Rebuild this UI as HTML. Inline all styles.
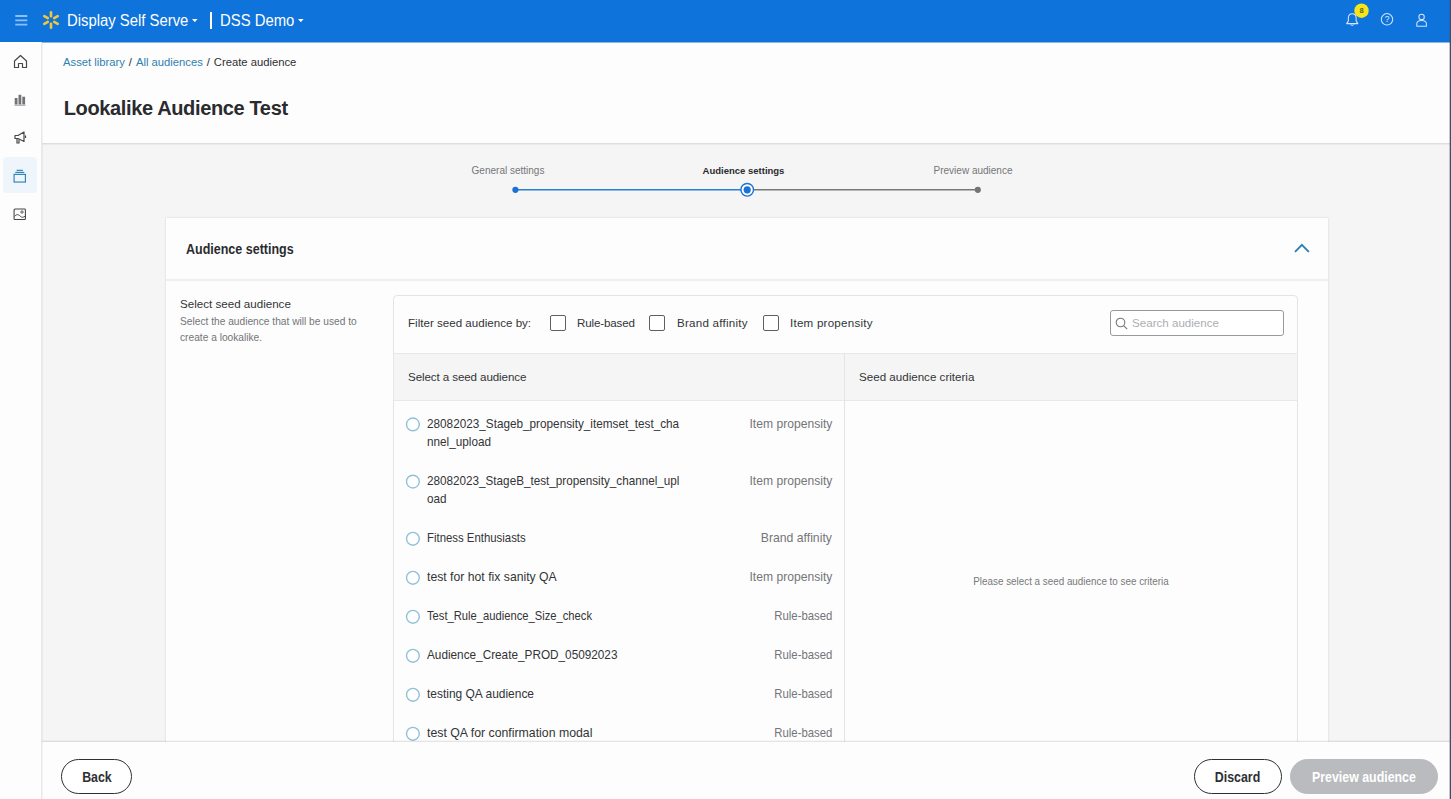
<!DOCTYPE html>
<html lang="en">
<head>
<meta charset="utf-8">
<title>Create audience</title>
<style>
*{box-sizing:border-box;margin:0;padding:0}
html,body{width:1451px;height:799px;overflow:hidden;background:#f5f5f5;font-family:"Liberation Sans",sans-serif;color:#2e2f32}
.abs{position:absolute}
#top{position:absolute;left:0;top:0;width:1451px;height:42px;background:#0e73db}
#top .t{position:absolute;color:#fff;font-size:16px;line-height:20px;top:11px;white-space:nowrap;transform-origin:0 50%;transform:scaleX(.928)}
#side{position:absolute;left:0;top:42px;width:42px;height:757px;background:#fdfdfd;border-right:1px solid #e8e8e8;box-shadow:1px 0 1px rgba(0,0,0,.04);z-index:2}
#head{position:absolute;left:42px;top:42px;width:1409px;height:101px;background:#fdfdfd;box-shadow:0 1px 2px rgba(0,0,0,.14)}
#crumb{position:absolute;left:63px;top:55px;font-size:11.250px;line-height:14px;white-space:nowrap;color:#2e2f32}
#crumb i{font-style:normal;margin:0 .800px}
#crumb a{color:#2f7fb3;text-decoration:none}
#title{position:absolute;left:63.700px;top:95px;font-size:20px;line-height:26px;font-weight:bold;white-space:nowrap;color:#2a2b2e;letter-spacing:-.36px}
.step{position:absolute;top:165px;font-size:10px;line-height:12px;color:#747578;white-space:nowrap;transform:translateX(-50%)}
#card{position:absolute;left:166px;top:218px;width:1162px;height:600px;background:#fdfdfd;box-shadow:0 0 2px rgba(0,0,0,.15)}
#cardh{position:absolute;left:0;top:0;width:100%;height:63px;border-bottom:2px solid #efefef}
#cardh span{position:absolute;left:20px;top:22px;font-size:14px;font-weight:bold;line-height:18px;color:#2a2b2e;transform-origin:0 50%;transform:scaleX(.893);white-space:nowrap}
#box{position:absolute;left:393px;top:295px;width:905px;height:520px;border:1px solid #e3e4e5;border-radius:4px 4px 0 0;background:#fdfdfd}
#thead{position:absolute;left:393px;top:353px;width:905px;height:48px;background:#f5f5f5;border:1px solid #e8e8e9}
#vdiv{position:absolute;left:844px;top:354px;width:1px;height:400px;background:#e3e4e5}
.f{position:absolute;font-size:11.6px;line-height:14px;color:#333437;white-space:nowrap}
.cb{position:absolute;top:315px;width:16px;height:16px;border:1px solid #5d5f62;border-radius:2px;background:#fff}
.n{position:absolute;left:426.500px;font-size:12.200px;line-height:18px;transform-origin:0 50%;color:#333437;white-space:nowrap}
.ty{position:absolute;right:619px;font-size:12.200px;line-height:18px;transform-origin:100% 50%;color:#747578;white-space:nowrap}
#bot{position:absolute;left:42px;top:742px;width:1409px;height:57px;background:#fdfdfd;box-shadow:0 -1px 1.500px rgba(0,0,0,.13)}
.btn span{display:inline-block;transform:scaleX(.825)}
.btn{position:absolute;top:759px;height:35px;border-radius:18px;font-size:15px;font-weight:bold;line-height:34px;text-align:center;border:1px solid #2e2f32;color:#2e2f32;background:#fff}
#edge{position:absolute;left:1450px;top:0;width:1px;height:799px;background:#3b5068}
</style>
</head>
<body>
<div id="top">
  <svg class="abs" style="left:14.600px;top:14px" width="14" height="13" viewBox="0 0 14 13"><path d="M0.300 2H12.300M0.300 6.300H12.300M0.300 10.700H12.300" stroke="#8cc0fb" stroke-width="1.800" fill="none"/></svg>
  <svg class="abs" style="left:42.200px;top:10.900px" width="18" height="18" viewBox="-9 -9 18 18"><g stroke="#f4c63a" stroke-width="2.600" stroke-linecap="round"><path d="M0 -3.700V-7.700"/><path d="M0 3.700V7.700"/><path d="M3.200 -1.850L6.700 -3.850"/><path d="M-3.200 -1.850L-6.700 -3.850"/><path d="M3.200 1.850L6.700 3.850"/><path d="M-3.200 1.850L-6.700 3.850"/></g></svg>
  <span class="t" style="left:67px">Display Self Serve</span>
  <span class="abs" style="left:210px;top:12px;width:1.500px;height:17px;background:#fff"></span>
  <span class="t" style="left:220px">DSS Demo</span>

  <svg class="abs" style="left:192.300px;top:19px" width="5.600" height="3.200" viewBox="0 0 7 4"><path d="M0 0H7L3.500 4Z" fill="#fff"/></svg>
  <svg class="abs" style="left:298.200px;top:19px" width="5.600" height="3.200" viewBox="0 0 7 4"><path d="M0 0H7L3.500 4Z" fill="#fff"/></svg>
  <svg class="abs" style="left:1335px;top:0" width="100" height="40" viewBox="0 0 100 40">
    <path d="M17.250 13.700c-2.400 0-3.900 1.800-3.900 4.200v3l-1.700 2.700h11.200l-1.700-2.700v-3c0-2.400-1.500-4.200-3.900-4.200z" fill="none" stroke="#d3e6fb" stroke-width="1.050" stroke-linejoin="round"/>
    <path d="M15.700 24.300a1.600 1.500 0 0 0 3.100 0" fill="none" stroke="#d3e6fb" stroke-width="1"/>
    <circle cx="26.500" cy="10.700" r="7.200" fill="#f5e51d"/>
    <text x="26.500" y="13.400" text-anchor="middle" font-family="Liberation Sans, sans-serif" font-size="7.600" font-weight="bold" fill="#6b6313">8</text>
    <circle cx="52" cy="19.300" r="5.700" fill="none" stroke="#d3e6fb" stroke-width="1.050"/>
    <text x="52" y="22.400" text-anchor="middle" font-family="Liberation Sans, sans-serif" font-size="8.500" fill="#e3f0ff">?</text>
    <circle cx="86.600" cy="16.900" r="2.700" fill="none" stroke="#d3e6fb" stroke-width="1.050"/>
    <path d="M81.800 26.300v-2.500c0-2.200 2-3.300 4.800-3.300s4.800 1.100 4.800 3.300v2.500z" fill="none" stroke="#d3e6fb" stroke-width="1.050" stroke-linejoin="round"/>
  </svg>
</div>
<div id="side">
  <div class="abs" style="left:3px;top:115px;width:34px;height:36px;background:#eef6fb;border-radius:4px"></div>
  <svg class="abs" style="left:12.700px;top:12px" width="15" height="15" viewBox="0 0 15 15"><path d="M1.500 7L7.500 1.500L13.500 7V13.500H9.500V9.500H5.500V13.500H1.500Z" transform="translate(0,0)" fill="none" stroke="#46474a" stroke-width="1.200" stroke-linejoin="round"/></svg>
  <svg class="abs" style="left:14px;top:51.500px" width="12" height="12" viewBox="0 0 12 12"><rect x="0.700" y="4" width="2.800" height="6.500" fill="#727376"/><rect x="4.500" y="0.800" width="2.800" height="9.700" fill="#727376"/><rect x="8.300" y="2.700" width="2.800" height="7.800" fill="#727376"/><rect x="0.500" y="10.800" width="11" height="0.800" fill="#8a8b8e"/></svg>
  <svg class="abs" style="left:12.700px;top:88px" width="15" height="15" viewBox="0 0 15 15"><path d="M2 5.500H5L11 2V11.500L5 8.500H2Z" fill="none" stroke="#46474a" stroke-width="1.200" stroke-linejoin="round"/><path d="M4 9V13H6V9.500" fill="none" stroke="#46474a" stroke-width="1.200"/><path d="M12.500 5.500V8" stroke="#46474a" stroke-width="1.200"/></svg>
  <svg class="abs" style="left:13.200px;top:127px" width="13.500" height="14.400" viewBox="0 0 15 16"><path d="M4 1.500H11" stroke="#2f86b7" stroke-width="1.300"/><path d="M2.500 3.800H12.500" stroke="#2f86b7" stroke-width="1.300"/><rect x="1.200" y="6" width="12.600" height="8.500" fill="none" stroke="#2f86b7" stroke-width="1.300"/></svg>
  <svg class="abs" style="left:13.200px;top:165.500px" width="13.500" height="12.600" viewBox="0 0 15 14"><rect x="1.200" y="1.200" width="12.600" height="11.600" rx="1" fill="none" stroke="#46474a" stroke-width="1.200"/><circle cx="10" cy="4.500" r="1.300" fill="none" stroke="#46474a" stroke-width="1"/><path d="M1.500 9.500C4 6.500 6 7 8 9S11.500 10.500 13.500 9" fill="none" stroke="#46474a" stroke-width="1.100"/></svg>
</div>
<div id="head"></div>
<div id="crumb"><a>Asset library</a><i> / </i><a>All audiences</a><i> / </i>Create audience</div>
<div id="title">Lookalike Audience Test</div>

<div class="step" style="left:508px">General settings</div>
<div class="step" style="left:743.500px;font-weight:bold;color:#2a2b2e;font-size:9.500px">Audience settings</div>
<div class="step" style="left:973px"><span>Preview audience</span></div>


<svg class="abs" style="left:500px;top:180px" width="490" height="20" viewBox="0 0 490 20">
<path d="M15.400 9.800H247.200" stroke="#2b7fd4" stroke-width="1.400"/><path d="M247.200 9.800H477.800" stroke="#77787b" stroke-width="1.400"/>
<circle cx="15.400" cy="9.800" r="3.100" fill="#1b72d2"/><circle cx="477.800" cy="9.800" r="3.100" fill="#737477"/>
<circle cx="247.200" cy="9.800" r="6.300" fill="#fff" stroke="#1b72d2" stroke-width="1.400"/><circle cx="247.200" cy="9.800" r="3.600" fill="#1b72d2"/>
</svg>
<div id="card"><div id="cardh"><span>Audience settings</span><svg class="abs" style="left:1128px;top:24.500px" width="16" height="10" viewBox="0 0 16 10"><path d="M1 8.800L7.900 1.800L14.800 8.800" fill="none" stroke="#2f7fb3" stroke-width="1.900"/></svg></div></div>
<div class="f" style="left:180px;top:297px">Select seed audience</div>
<div class="f" style="left:180px;top:313.500px;font-size:10.200px;line-height:16px;color:#747578;white-space:normal;width:200px">Select the audience that will be used to create a lookalike.</div>

<div id="box"></div>
<div id="thead"></div>
<div id="vdiv"></div>
<div class="f" style="left:408px;top:316px">Filter seed audience by:</div>
<div class="cb" style="left:550px"></div><div class="f" style="left:577px;top:316px;letter-spacing:-.14px">Rule-based</div>
<div class="cb" style="left:649px"></div><div class="f" style="left:677px;top:316px;letter-spacing:.24px">Brand affinity</div>
<div class="cb" style="left:763px"></div><div class="f" style="left:790px;top:316px;letter-spacing:.23px">Item propensity</div>
<div class="f" style="left:408px;top:370px;letter-spacing:-.1px">Select a seed audience</div>
<div class="f" style="left:859px;top:370px">Seed audience criteria</div>

<svg class="abs" style="left:400px;top:410px" width="30" height="340" viewBox="400 410 30 340">
<circle cx="412.9" cy="424.4" r="6.4" fill="#fff" stroke="#8fc1d6" stroke-width="1.4"/>
<circle cx="412.9" cy="481.6" r="6.4" fill="#fff" stroke="#8fc1d6" stroke-width="1.4"/>
<circle cx="412.9" cy="538.8" r="6.4" fill="#fff" stroke="#8fc1d6" stroke-width="1.4"/>
<circle cx="412.9" cy="577.8" r="6.4" fill="#fff" stroke="#8fc1d6" stroke-width="1.4"/>
<circle cx="412.9" cy="616.8" r="6.4" fill="#fff" stroke="#8fc1d6" stroke-width="1.4"/>
<circle cx="412.9" cy="655.8" r="6.4" fill="#fff" stroke="#8fc1d6" stroke-width="1.4"/>
<circle cx="412.9" cy="694.8" r="6.4" fill="#fff" stroke="#8fc1d6" stroke-width="1.4"/>
<circle cx="412.9" cy="733.8" r="6.4" fill="#fff" stroke="#8fc1d6" stroke-width="1.4"/>
</svg>
<div class="n" id="n0" style="top:415px;transform:scaleX(0.964)">28082023_Stageb_propensity_itemset_test_cha<br>nnel_upload</div><div class="ty" id="t0" style="top:415px;transform:scaleX(0.994)">Item propensity</div>
<div class="n" id="n1" style="top:472px;transform:scaleX(0.960)">28082023_StageB_test_propensity_channel_upl<br>oad</div><div class="ty" id="t1" style="top:472px;transform:scaleX(0.994)">Item propensity</div>
<div class="n" id="n2" style="top:529px;transform:scaleX(0.934)">Fitness Enthusiasts</div><div class="ty" id="t2" style="top:529px;transform:scaleX(1.004)">Brand affinity</div>
<div class="n" id="n3" style="top:568px;transform:scaleX(1.003)">test for hot fix sanity QA</div><div class="ty" id="t3" style="top:568px;transform:scaleX(0.994)">Item propensity</div>
<div class="n" id="n4" style="top:607px;transform:scaleX(0.919)">Test_Rule_audience_Size_check</div><div class="ty" id="t4" style="top:607px;transform:scaleX(0.931)">Rule-based</div>
<div class="n" id="n5" style="top:646px;transform:scaleX(0.966)">Audience_Create_PROD_05092023</div><div class="ty" id="t5" style="top:646px;transform:scaleX(0.931)">Rule-based</div>
<div class="n" id="n6" style="top:685px;transform:scaleX(0.981)">testing QA audience</div><div class="ty" id="t6" style="top:685px;transform:scaleX(0.931)">Rule-based</div>
<div class="n" id="n7" style="top:724px;transform:scaleX(1.009)">test QA for confirmation modal</div><div class="ty" id="t7" style="top:724px;transform:scaleX(0.931)">Rule-based</div>
<div class="abs" style="left:1110px;top:310px;width:174px;height:26px;border:1px solid #97999c;border-radius:3px;background:#fff"></div>
<svg class="abs" style="left:1114.500px;top:317px" width="13" height="13" viewBox="0 0 13 13"><circle cx="5.500" cy="5.500" r="4.300" fill="none" stroke="#747679" stroke-width="1.100"/><path d="M8.600 8.600L12.200 12.200" stroke="#747679" stroke-width="1.100"/></svg>
<div class="f" style="left:1132px;top:316px;color:#adaeb1">Search audience</div>
<div class="f" style="left:1071px;top:575px;font-size:11.200px;line-height:13px;color:#77787b;transform:translateX(-50%) scaleX(.88)">Please select a seed audience to see criteria</div>
<div id="bot"></div>
<div class="btn" style="left:61px;width:71px"><span>Back</span></div>
<div class="btn" style="left:1194px;width:88px"><span>Discard</span></div>
<div class="btn" style="left:1290px;width:148px;background:#babbbe;border-color:#babbbe;color:#fff"><span>Preview audience</span></div>
<div class="abs" style="left:0;top:42px;width:1451px;height:1px;background:#8db6e6"></div>
<div class="abs" style="left:1449px;top:0;width:1px;height:799px;background:rgba(59,80,104,.3)"></div>
<div id="edge"></div>
</body>
</html>
